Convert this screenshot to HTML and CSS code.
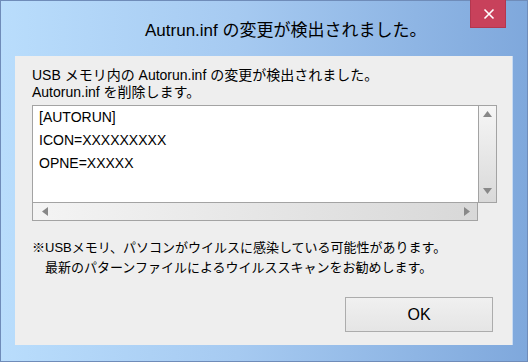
FILE: index.html
```html
<!DOCTYPE html>
<html lang="ja">
<head>
    <meta charset="UTF-8">
    <title>Autorun.inf</title>
    <link rel="stylesheet" href="styles.css">
</head>
<body>

<div class="window">
    <div class="titlebar">
        <div class="title">Autrun.inf の変更が検出されました。</div>
        <div class="close-btn">
            <svg width="36" height="28" viewBox="0 0 36 28">
                <path d="M14.5 9.5 L23.5 18.5 M23.5 9.5 L14.5 18.5" stroke="#fff" stroke-width="1.6" fill="none"/>
            </svg>
        </div>
    </div>

    <div class="client">
        <p class="message">USB メモリ内の Autorun.inf の変更が検出されました。<br>Autorun.inf を削除します。</p>

        <div class="listbox">
            <div class="list-content">
                <div>[AUTORUN]</div>
                <div>ICON=XXXXXXXXX</div>
                <div>OPNE=XXXXX</div>
            </div>
            <div class="vscroll">
                <svg width="17" height="12" viewBox="0 0 17 12"><polygon points="4,9 13,9 8.5,3" fill="#888"/></svg>
                <svg width="17" height="12" viewBox="0 0 17 12"><polygon points="4,3 13,3 8.5,9" fill="#888"/></svg>
            </div>
            <div class="hscroll">
                <svg width="14" height="17" viewBox="0 0 14 17"><polygon points="10,4 10,13 4,8.5" fill="#888"/></svg>
                <svg width="14" height="17" viewBox="0 0 14 17"><polygon points="4,4 4,13 10,8.5" fill="#888"/></svg>
            </div>
        </div>

        <p class="note">※USBメモリ、パソコンがウイルスに感染している可能性があります。<br>　最新のパターンファイルによるウイルススキャンをお勧めします。</p>

        <div class="actions">
            <button class="ok-btn">OK</button>
        </div>
    </div>
</div>

</body>
</html>
```

FILE: styles.css
```css
body {
    margin: 0;
    font-family: "Liberation Sans", "Noto Sans CJK JP", sans-serif;
    color: #000;
}
.window {
    width: 528px;
    height: 362px;
    box-sizing: border-box;
    border: 1px solid #6f8cb9;
    background: linear-gradient(to right, #b9ddfc 0%, #a6caf1 45%, #7fa8dc 100%);
    display: flex;
    flex-direction: column;
}
.titlebar {
    height: 55px;
    display: flex;
    align-items: flex-start;
}
.title {
    flex: 1;
    padding-left: 144px;
    padding-top: 20px;
    font-size: 17px;
    line-height: 20px;
    color: #000;
}
.close-btn {
    width: 36px;
    height: 28px;
    margin-top: -1px;
    margin-right: 21px;
    background-color: #c8415b;
    box-shadow: inset 0 -1px 0 #b3374f, inset 1px 0 0 #b3374f, inset -1px 0 0 #b3374f;
}
.close-btn svg {
    display: block;
}
.client {
    width: 498px;
    height: 289px;
    box-sizing: border-box;
    margin-left: 14px;
    padding: 11px 0 13px 17px;
    background-color: #eeeeee;
    border-right: 1px solid #c8dbf2;
    display: flex;
    flex-direction: column;
}
.message {
    margin: 0;
    font-size: 14px;
    line-height: 17px;
}
.listbox {
    margin-top: 4px;
    display: grid;
    grid-template-columns: 446px 19px;
    grid-template-rows: 98px 18px;
    width: 465px;
}
.list-content {
    background-color: #fff;
    border-top: 1px solid #a3a3a3;
    border-left: 1px solid #a3a3a3;
    border-bottom: 1px solid #a3a3a3;
    padding-left: 6px;
    font-size: 14px;
    line-height: 23px;
}
.vscroll {
    border: 1px solid #a3a3a3;
    background: linear-gradient(to bottom, #f6f6f6, #d9d9d9);
    display: flex;
    flex-direction: column;
    justify-content: space-between;
    padding: 2px 0 5px;
}
.vscroll svg, .hscroll svg {
    display: block;
}
.hscroll {
    border-left: 1px solid #a3a3a3;
    border-right: 1px solid #a3a3a3;
    border-bottom: 1px solid #a3a3a3;
    background: linear-gradient(to right, #f4f4f4, #d8d8d8);
    display: flex;
    justify-content: space-between;
    padding: 0 3px 0 5px;
}
.note {
    margin: 17px 0 0;
    font-size: 13px;
    line-height: 20px;
}
.actions {
    margin-top: auto;
    display: flex;
    justify-content: flex-end;
    padding-right: 19px;
}
.ok-btn {
    width: 148px;
    height: 35px;
    border: 1px solid #acacac;
    background: linear-gradient(to bottom, #f0f0f0, #e5e5e5);
    font-family: "Liberation Sans", sans-serif;
    font-size: 16px;
    color: #000;
    padding: 0;
}
```
